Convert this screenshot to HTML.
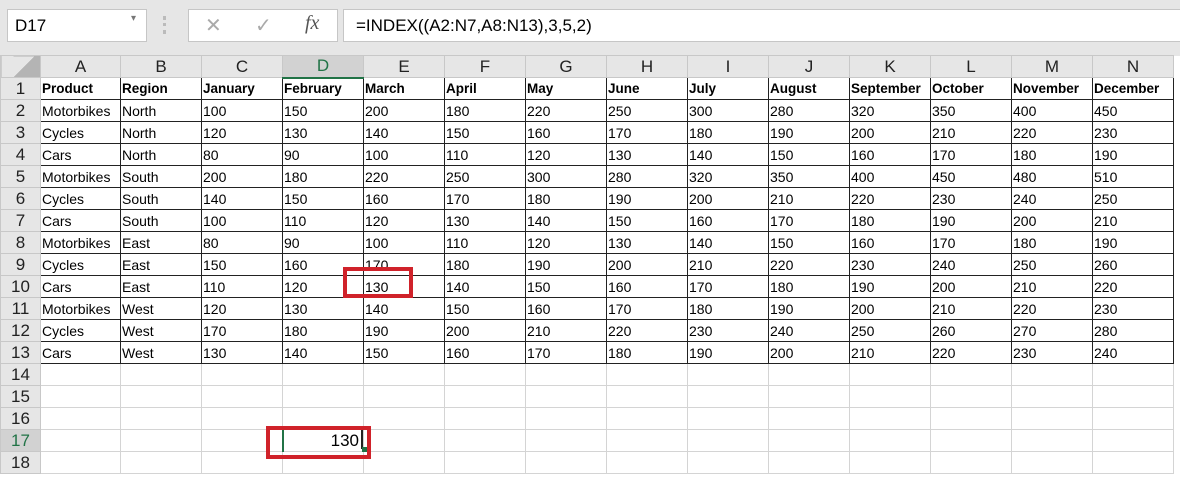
<!DOCTYPE html>
<html><head><style>
*{margin:0;padding:0;box-sizing:border-box}
body{width:1180px;height:486px;overflow:hidden;background:#fff;font-family:"Liberation Sans",sans-serif;position:relative}
#top{position:absolute;left:0;top:0;width:1180px;height:56px;background:#e6e6e6}
.box{position:absolute;background:#fff;border:1px solid #c6c6c6}
#grid{position:absolute;left:0;top:55px;border-collapse:collapse;table-layout:fixed}
#grid td{height:22px;border:1px solid #d4d4d4;font-size:14px;padding:0 1px;white-space:nowrap;overflow:hidden;color:#000}
#grid tr.h td{height:22px;background:#e6e6e6;text-align:center;font-size:17px;color:#222;border-color:#c8c8c8}
#grid td.r{background:#e6e6e6;text-align:center;font-size:17px;color:#222;border-color:#c8c8c8;padding:0}
#grid tr.b td:not(.r){border:1px solid #222}
#grid tr.b1 td:not(.r){font-weight:bold;font-size:13.5px}
.red{position:absolute;border:4px solid #d0222a}
</style></head><body>
<div id="top">
<div class="box" style="left:7px;top:9px;width:140px;height:33px;font-size:17px;padding:6px 0 0 7px">D17<span style="position:absolute;right:10px;top:3px;font-size:10px;color:#777">&#9662;</span></div>
<div style="position:absolute;left:163px;top:16px;width:3px;height:18px;border-left:3px dotted #bbb"></div>
<div class="box" style="left:188px;top:9px;width:150px;height:33px;font-size:20px;color:#aaa">
<span style="position:absolute;left:16px;top:3px">&#10005;</span>
<span style="position:absolute;left:66px;top:3px">&#10003;</span>
<span style="position:absolute;left:116px;top:2px;font-family:'Liberation Serif',serif;font-style:italic;color:#555">fx</span></div>
<div class="box" style="left:343px;top:9px;width:840px;height:33px;font-size:17px;padding:6px 0 0 12px">=INDEX((A2:N7,A8:N13),3,5,2)</div>
</div>
<table id="grid">
<colgroup><col style="width:40px"><col style="width:80px"><col style="width:81px"><col style="width:81px"><col style="width:81px"><col style="width:81px"><col style="width:81px"><col style="width:81px"><col style="width:81px"><col style="width:81px"><col style="width:81px"><col style="width:81px"><col style="width:81px"><col style="width:81px"><col style="width:81px"></colgroup>
<tr class="h"><td style="background:linear-gradient(135deg,#e6e6e6 55%,#b4b4b4 55%)"></td><td>A</td><td>B</td><td>C</td><td style="background:#d2d2d2;border-bottom:2px solid #217346;color:#217346">D</td><td>E</td><td>F</td><td>G</td><td>H</td><td>I</td><td>J</td><td>K</td><td>L</td><td>M</td><td>N</td></tr>
<tr class="b b1"><td class="r">1</td><td>Product</td><td>Region</td><td>January</td><td>February</td><td>March</td><td>April</td><td>May</td><td>June</td><td>July</td><td>August</td><td>September</td><td>October</td><td>November</td><td>December</td></tr>
<tr class="b"><td class="r">2</td><td>Motorbikes</td><td>North</td><td>100</td><td>150</td><td>200</td><td>180</td><td>220</td><td>250</td><td>300</td><td>280</td><td>320</td><td>350</td><td>400</td><td>450</td></tr>
<tr class="b"><td class="r">3</td><td>Cycles</td><td>North</td><td>120</td><td>130</td><td>140</td><td>150</td><td>160</td><td>170</td><td>180</td><td>190</td><td>200</td><td>210</td><td>220</td><td>230</td></tr>
<tr class="b"><td class="r">4</td><td>Cars</td><td>North</td><td>80</td><td>90</td><td>100</td><td>110</td><td>120</td><td>130</td><td>140</td><td>150</td><td>160</td><td>170</td><td>180</td><td>190</td></tr>
<tr class="b"><td class="r">5</td><td>Motorbikes</td><td>South</td><td>200</td><td>180</td><td>220</td><td>250</td><td>300</td><td>280</td><td>320</td><td>350</td><td>400</td><td>450</td><td>480</td><td>510</td></tr>
<tr class="b"><td class="r">6</td><td>Cycles</td><td>South</td><td>140</td><td>150</td><td>160</td><td>170</td><td>180</td><td>190</td><td>200</td><td>210</td><td>220</td><td>230</td><td>240</td><td>250</td></tr>
<tr class="b"><td class="r">7</td><td>Cars</td><td>South</td><td>100</td><td>110</td><td>120</td><td>130</td><td>140</td><td>150</td><td>160</td><td>170</td><td>180</td><td>190</td><td>200</td><td>210</td></tr>
<tr class="b"><td class="r">8</td><td>Motorbikes</td><td>East</td><td>80</td><td>90</td><td>100</td><td>110</td><td>120</td><td>130</td><td>140</td><td>150</td><td>160</td><td>170</td><td>180</td><td>190</td></tr>
<tr class="b"><td class="r">9</td><td>Cycles</td><td>East</td><td>150</td><td>160</td><td>170</td><td>180</td><td>190</td><td>200</td><td>210</td><td>220</td><td>230</td><td>240</td><td>250</td><td>260</td></tr>
<tr class="b"><td class="r">10</td><td>Cars</td><td>East</td><td>110</td><td>120</td><td>130</td><td>140</td><td>150</td><td>160</td><td>170</td><td>180</td><td>190</td><td>200</td><td>210</td><td>220</td></tr>
<tr class="b"><td class="r">11</td><td>Motorbikes</td><td>West</td><td>120</td><td>130</td><td>140</td><td>150</td><td>160</td><td>170</td><td>180</td><td>190</td><td>200</td><td>210</td><td>220</td><td>230</td></tr>
<tr class="b"><td class="r">12</td><td>Cycles</td><td>West</td><td>170</td><td>180</td><td>190</td><td>200</td><td>210</td><td>220</td><td>230</td><td>240</td><td>250</td><td>260</td><td>270</td><td>280</td></tr>
<tr class="b"><td class="r">13</td><td>Cars</td><td>West</td><td>130</td><td>140</td><td>150</td><td>160</td><td>170</td><td>180</td><td>190</td><td>200</td><td>210</td><td>220</td><td>230</td><td>240</td></tr>
<tr><td class="r">14</td><td></td><td></td><td></td><td></td><td></td><td></td><td></td><td></td><td></td><td></td><td></td><td></td><td></td><td></td></tr>
<tr><td class="r">15</td><td></td><td></td><td></td><td></td><td></td><td></td><td></td><td></td><td></td><td></td><td></td><td></td><td></td><td></td></tr>
<tr><td class="r">16</td><td></td><td></td><td></td><td></td><td></td><td></td><td></td><td></td><td></td><td></td><td></td><td></td><td></td><td></td></tr>
<tr><td class="r" style="background:#d2d2d2;color:#217346">17</td><td></td><td></td><td></td><td style="border-left:2px solid #217346;text-align:right;font-size:17px;padding-right:4px">130</td><td></td><td></td><td></td><td></td><td></td><td></td><td></td><td></td><td></td><td></td></tr>
<tr><td class="r">18</td><td></td><td></td><td></td><td></td><td></td><td></td><td></td><td></td><td></td><td></td><td></td><td></td><td></td><td></td></tr>
</table>
<div style="position:absolute;left:361px;top:429px;width:2px;height:20px;background:#222"></div>
<div style="position:absolute;left:362px;top:447px;width:5px;height:5px;background:#217346"></div>
<div class="red" style="left:343px;top:267px;width:70px;height:31px"></div>
<div class="red" style="left:266px;top:426px;width:105px;height:33px"></div>
</body></html>
